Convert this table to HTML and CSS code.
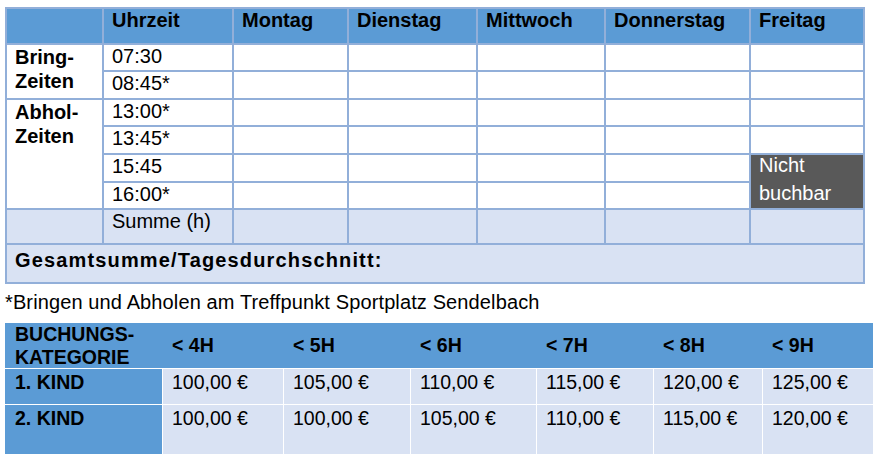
FILE: index.html
```html
<!DOCTYPE html>
<html lang="de">
<head>
<meta charset="utf-8">
<title>Buchungsplan</title>
<link rel="stylesheet" href="styles.css">
</head>
<body>
<div class="page">
  <div class="plan">
    <div class="cell head"></div>
    <div class="cell head">Uhrzeit</div>
    <div class="cell head">Montag</div>
    <div class="cell head">Dienstag</div>
    <div class="cell head">Mittwoch</div>
    <div class="cell head">Donnerstag</div>
    <div class="cell head">Freitag</div>

    <div class="cell label span2">Bring-<br>Zeiten</div>
    <div class="cell">07:30</div><div class="cell"></div><div class="cell"></div><div class="cell"></div><div class="cell"></div><div class="cell"></div>
    <div class="cell">08:45*</div><div class="cell"></div><div class="cell"></div><div class="cell"></div><div class="cell"></div><div class="cell"></div>

    <div class="cell label span4">Abhol-<br>Zeiten</div>
    <div class="cell">13:00*</div><div class="cell"></div><div class="cell"></div><div class="cell"></div><div class="cell"></div><div class="cell"></div>
    <div class="cell">13:45*</div><div class="cell"></div><div class="cell"></div><div class="cell"></div><div class="cell"></div><div class="cell"></div>
    <div class="cell">15:45</div><div class="cell"></div><div class="cell"></div><div class="cell"></div><div class="cell"></div>
    <div class="cell dark span2"><div class="dark-text">Nicht<br>buchbar</div></div>
    <div class="cell">16:00*</div><div class="cell"></div><div class="cell"></div><div class="cell"></div><div class="cell"></div>

    <div class="cell light"></div>
    <div class="cell light">Summe (h)</div>
    <div class="cell light"></div><div class="cell light"></div><div class="cell light"></div><div class="cell light"></div><div class="cell light"></div>

    <div class="cell light total">Gesamtsumme/Tagesdurchschnitt:</div>
  </div>

  <p class="note">*Bringen und Abholen am Treffpunkt Sportplatz Sendelbach</p>

  <div class="prices">
    <div class="prow phead">
      <div class="pc plabel">BUCHUNGS-<br>KATEGORIE</div>
      <div class="pc">&lt; 4H</div>
      <div class="pc">&lt; 5H</div>
      <div class="pc">&lt; 6H</div>
      <div class="pc">&lt; 7H</div>
      <div class="pc">&lt; 8H</div>
      <div class="pc">&lt; 9H</div>
    </div>
    <div class="prow pbody r1">
      <div class="pc kind">1. KIND</div>
      <div class="pc val">100,00 €</div>
      <div class="pc val">105,00 €</div>
      <div class="pc val">110,00 €</div>
      <div class="pc val">115,00 €</div>
      <div class="pc val">120,00 €</div>
      <div class="pc val">125,00 €</div>
    </div>
    <div class="prow pbody r2">
      <div class="pc kind">2. KIND</div>
      <div class="pc val">100,00 €</div>
      <div class="pc val">100,00 €</div>
      <div class="pc val">105,00 €</div>
      <div class="pc val">110,00 €</div>
      <div class="pc val">115,00 €</div>
      <div class="pc val">120,00 €</div>
    </div>
  </div>
</div>
</body>
</html>
```
FILE: styles.css
```css
html, body {
  margin: 0;
  padding: 0;
  background: #ffffff;
}

body {
  font-family: "Liberation Sans", Arial, sans-serif;
  color: #000000;
  font-size: 20px;
  line-height: 23px;
}

.page {
  padding: 7px 0 0 5px;
}

/* ---------- schedule grid ---------- */
.plan {
  display: grid;
  grid-template-columns: 95px 128px 113px 127px 126px 143px 112px;
  grid-template-rows: 34px 25px 26px 25px 26px 26px 25px 33px 37px;
  gap: 2px;
  padding: 2px;
  width: 860px;
  box-sizing: border-box;
  background: #92afd9;
}

.cell {
  background: #ffffff;
  padding: 0 0 0 8px;
  white-space: nowrap;
  overflow: visible;
}

.head {
  background: #5b9bd5;
  font-weight: bold;
}

.label {
  font-weight: bold;
  line-height: 24px;
}

.span2 {
  grid-row: span 2;
}

.span4 {
  grid-row: span 4;
}

.light {
  background: #d9e2f3;
}

.dark {
  background: #595959;
  color: #ffffff;
}

.dark-text {
  line-height: 27.5px;
  margin-top: -3px;
}

.total {
  grid-column: 1 / -1;
  font-weight: bold;
  letter-spacing: 1.15px;
  padding-top: 4px;
}

/* ---------- footnote ---------- */
.note {
  margin: 7px 0 0 0;
  letter-spacing: 0.12px;
}

/* ---------- price table ---------- */
.prices {
  margin-top: 9px;
  width: 868px;
  display: flex;
  flex-direction: column;
  gap: 1px;
  background: #ffffff;
  font-size: 19.5px;
  line-height: 23px;
}

.prow {
  display: grid;
  grid-template-columns: 157px 120px 126px 125px 116px 108px 110px;
  column-gap: 1px;
}

.phead {
  background: #5b9bd5;
  height: 45px;
  align-items: center;
  font-weight: bold;
}

.pbody {
  background: #ffffff;
}

.r1 {
  height: 35px;
}

.r2 {
  height: 49px;
}

.pc {
  padding-left: 9px;
  white-space: nowrap;
}

.plabel {
  padding-left: 10px;
  line-height: 22.5px;
}

.pbody .pc {
  padding-top: 2px;
}

.kind {
  background: #5b9bd5;
  font-weight: bold;
  padding-left: 10px;
}

.val {
  background: #d9e2f3;
}
```
